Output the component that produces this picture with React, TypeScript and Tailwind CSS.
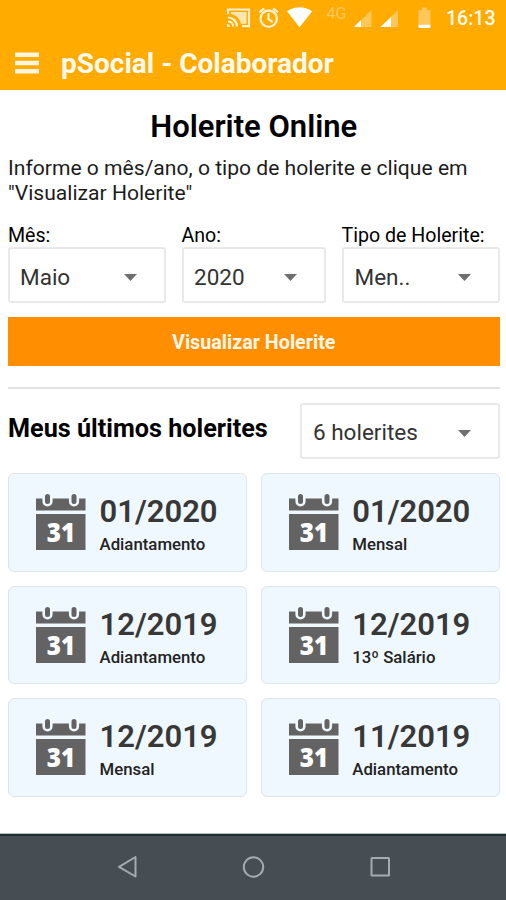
import React from "react";

const payslips = [
  { period: "01/2020", kind: "Adiantamento" },
  { period: "01/2020", kind: "Mensal" },
  { period: "12/2019", kind: "Adiantamento" },
  { period: "12/2019", kind: "13º Salário" },
  { period: "12/2019", kind: "Mensal" },
  { period: "11/2019", kind: "Adiantamento" },
];

function StatusBar() {
  return (
    <div className="flex h-9 items-center pl-[226px] text-[#fffaf0]">
      <svg className="h-9 w-[210px] shrink-0" viewBox="226 0 210 36" fill="none">
        {/* cast */}
        <g stroke="#fff0d0" strokeWidth="2.200">
          <path d="M228 14V9.500h21v16.700h-7" />
          <path d="M228 17.500a9 9 0 0 1 9 9M228 21.300a5.200 5.200 0 0 1 5.200 5.200" />
        </g>
        <path d="M231 12h15.500v11.700h-5.500A13 13 0 0 0 231 14z" fill="#fff0d0" fillOpacity=".85" />
        <path d="M227 24a3 3 0 0 1 3 3h-3z" fill="#fff0d0" />
        {/* alarm */}
        <g stroke="#fff0d0" strokeWidth="2.300">
          <circle cx="268.700" cy="18.700" r="8.200" />
          <path d="M268.500 13.200v6l4.200 2.800M259.300 12.300l4.800-4M278 12.300l-4.800-4" />
        </g>
        {/* wifi */}
        <path d="M287 11.200q12.500-7.800 25.200 0L299.600 27.300z" fill="#fff" />
        {/* mobile signal */}
        <path d="M371.500 10v17H354z" fill="#ffc75a" />
        <path d="M361 20v7h-7z" fill="#fff" />
        <path d="M398 10v17h-17.500z" fill="#ffc75a" />
        <path d="M391 17v10h-10.500z" fill="#fff" />
        {/* battery */}
        <path d="M418.500 10h3.500V7.500h5V10h3.500v15h-12z" fill="#ffc75a" />
        <path d="M418.500 24.800h12V28h-12z" fill="#fff" />
        <text x="326.500" y="18.800" fill="#ffc861" fontSize="16" fontFamily="Roboto, sans-serif">4G</text>
      </svg>
      <span className="ml-[10px] pt-[1px] text-[19.500px] font-medium leading-9">16:13</span>
    </div>
  );
}

function Select({ label, className }: { label: string; className: string }) {
  return (
    <button
      className={`flex h-14 items-center justify-between rounded-[3px] border-2 border-[#e9e9e9] bg-white text-[22.500px] text-[#333] ${className}`}
    >
      <span className="pt-1">{label}</span>
      <svg className="mt-1 h-[7px] w-[13px]" viewBox="0 0 13 7">
        <path d="M0 0h13L6.500 7z" fill="#6f6f6f" />
      </svg>
    </button>
  );
}

function CalendarIcon() {
  return (
    <svg className="h-[58px] w-[50px] shrink-0" viewBox="0 0 50 58">
      <path d="M0 5.500h49.500v12H0zM0 21h49.500v36H0z" fill="#636363" />
      <g fill="#636363" stroke="#f0f8ff" strokeWidth="2.600">
        <rect x="7.700" y="-.2" width="7.600" height="12.500" rx="3.800" />
        <rect x="34.200" y="-.2" width="7.600" height="12.500" rx="3.800" />
      </g>
      <text x="25" y="49" textAnchor="middle" fill="#fff" fontSize="27" fontWeight="800" fontFamily="'Open Sans', sans-serif" textLength="28.500" lengthAdjust="spacingAndGlyphs">31</text>
    </svg>
  );
}

export default function App() {
  return (
    <div className="flex h-[900px] w-[506px] flex-col overflow-hidden bg-white font-['Roboto',sans-serif] text-black">
      <header className="h-[90px] bg-[#ffab00] text-[#fffaf0]">
        <StatusBar />
        <div className="flex h-[54px] items-center pl-[15px]">
          <svg className="h-[22px] w-6" viewBox="0 0 24 22">
            <path d="M0 .5h24v4.500H0zM0 8.700h24v4.500H0zM0 16.900h24v4.500H0z" fill="#fff5e0" />
          </svg>
          <h1 className="ml-[22px] pt-0.5 text-[28px] font-bold leading-[54px]">pSocial - Colaborador</h1>
        </div>
      </header>
      <main className="flex-1 pl-2 pr-[6.500px]">
        <h2 className="h-[65px] pt-[16px] text-center text-[31px] font-semibold leading-[42px]">Holerite Online</h2>
        <p className="h-[69px] whitespace-nowrap text-[21.100px] leading-[25px] text-[#1c1c1c]">
          Informe o mês/ano, o tipo de holerite e clique em
          <br />
          "Visualizar Holerite"
        </p>
        <div className="flex justify-between text-[19.600px] leading-[23px]">
          <div>
            <div>Mês:</div>
            <Select label="Maio" className="w-[157.500px] pl-[10px] pr-[27px]" />
          </div>
          <div>
            <div>Ano:</div>
            <Select label="2020" className="w-[144px] pl-[10.500px] pr-[27px]" />
          </div>
          <div>
            <div className="whitespace-nowrap">Tipo de Holerite:</div>
            <Select label="Men.." className="w-[158px] pl-[11px] pr-[27px]" />
          </div>
        </div>
        <button className="mt-[14px] h-[49px] w-full bg-[#ff8f00] pt-[3px] text-[19.700px] font-bold text-[#fff6ea]">
          Visualizar Holerite
        </button>
        <hr className="mt-[21px] border-t-2 border-[#e2e2e2]" />
        <div className="mt-[14px] flex items-start justify-between">
          <h3 className="whitespace-nowrap text-[25.200px] font-bold leading-[52px]">Meus últimos holerites</h3>
          <Select label="6 holerites" className="w-[200px] pl-[11.500px] pr-[27px]" />
        </div>
        <div className="mt-[14px] grid grid-cols-2 gap-[14px]">
          {payslips.map((p, i) => (
            <article key={i} className="flex h-[98.500px] items-start rounded-[6px] border border-[#dce5ea] bg-[#f0f8ff] pl-[27px] pt-[19px]">
              <CalendarIcon />
              <div className="ml-[13.500px] whitespace-nowrap">
                <div className="text-[31px] font-semibold leading-[38px] text-[#383838]">{p.period}</div>
                <div className="text-[16.800px] font-medium leading-[26px] text-[#222]">{p.kind}</div>
              </div>
            </article>
          ))}
        </div>
      </main>
      <nav className="h-[67px] border-t border-[#b9bdbe] bg-[#474e53]">
        <svg className="h-[66px] w-[506px]" viewBox="0 834 506 66" fill="none" stroke="#a5abad" strokeWidth="2" strokeLinejoin="round">
          <path d="M0 835h506" stroke="#1b302f" />
          <path d="M135.500 857v19.500L119 866.800z" />
          <circle cx="253.500" cy="867" r="9.700" />
          <rect x="371.500" y="858" width="17.500" height="17.500" rx=".5" />
        </svg>
      </nav>
    </div>
  );
}
